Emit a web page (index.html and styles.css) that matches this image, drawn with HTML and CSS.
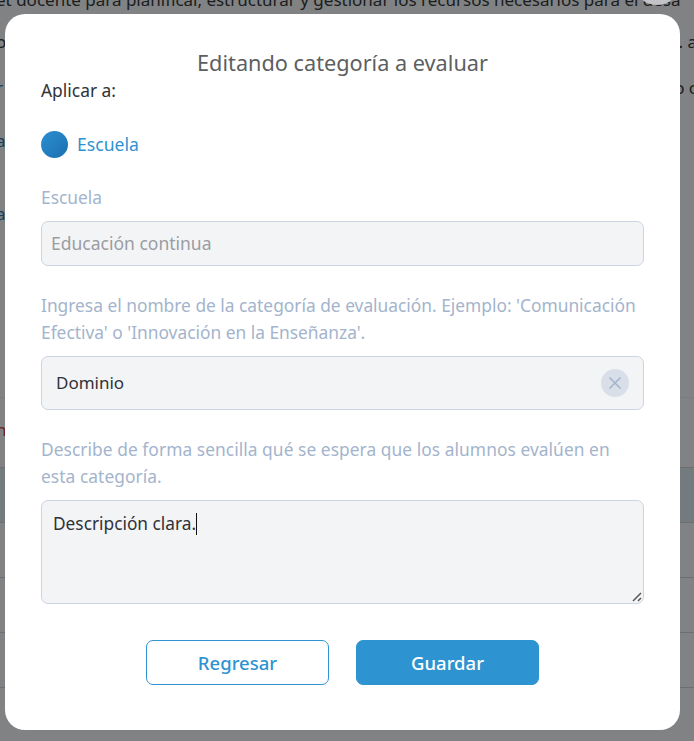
FILE: index.html
```html
<!DOCTYPE html>
<html lang="es">
<head>
  <meta charset="UTF-8">
  <meta name="viewport" content="width=device-width, initial-scale=1.0">
  <title>Editando categoría a evaluar</title>
  <link rel="stylesheet" href="styles.css">
</head>
<body>

  <!-- Page behind the overlay, only its edges show past the modal -->
  <div class="page">
    <p class="intro">et docente para planificar, estructurar y gestionar los recursos necesarios para el desa</p>
    <div class="bg-line gap-14"><span>o</span><span>. a</span></div>
    <div class="bg-line gap-18"><span class="link-dark">r</span><span>o c</span></div>
    <div class="bg-line gap-25 link"><span>a</span></div>
    <div class="bg-line gap-0 link"><span>ı</span></div>
    <div class="bg-line gap-18 link"><span>a</span></div>
    <div class="band-start"></div>
    <div class="bg-line gap-18 error-text"><span>n</span></div>
    <div class="row-line row-tint"></div>
    <div class="row-line"></div>
    <div class="row-line"></div>
    <div class="row-line"></div>
    <div class="row-line"></div>
  </div>

  <div class="overlay"></div>
  <div class="close-ball"></div>

  <!-- Modal -->
  <div class="modal">
    <h2 class="modal-title">Editando categoría a evaluar</h2>
    <p class="apply-label">Aplicar a:</p>
    <label class="radio-row">
      <span class="radio-dot"></span>
      <span class="radio-text">Escuela</span>
    </label>

    <p class="field-label">Escuela</p>
    <div class="field field-disabled">Educación continua</div>

    <p class="field-label">Ingresa el nombre de la categoría de evaluación. Ejemplo: 'Comunicación Efectiva' o 'Innovación en la Enseñanza'.</p>
    <div class="field field-name">
      <span>Dominio</span>
      <span class="clear-btn">
        <svg width="14" height="14" viewBox="0 0 14 14"><path d="M1.5 1.5l11 11M12.5 1.5l-11 11" stroke="#a3b4cc" stroke-width="1.6" fill="none"/></svg>
      </span>
    </div>

    <p class="field-label field-label-wide">Describe de forma sencilla qué se espera que los alumnos evalúen en esta categoría.</p>
    <div class="field field-area">
      <span>Descripción clara.</span><span class="caret"></span>
      <svg class="grip" width="10" height="10" viewBox="0 0 10 10"><path d="M1 9l8-8M6 9l3-3" stroke="#555" stroke-width="1.5" fill="none"/></svg>
    </div>

    <div class="actions">
      <button class="btn btn-outline">Regresar</button>
      <button class="btn btn-solid">Guardar</button>
    </div>
  </div>

</body>
</html>
```

FILE: styles.css
```css
* {
  box-sizing: border-box;
}
body, html {
  margin: 0;
  padding: 0;
  width: 100%;
  height: 100%;
  overflow: hidden;
  font-family: "Noto Sans", "Open Sans", sans-serif;
  background-color: #fff;
}
.page {
  margin-top: -14px;
  font-size: 17px;
  color: #333;
}
.intro {
  margin: 0 0 0 -4px;
  width: 720px;
  line-height: 28px;
  white-space: nowrap;
}
.bg-line {
  display: flex;
  justify-content: space-between;
  height: 28px;
  line-height: 28px;
  padding-left: 0;
  overflow: hidden;
}
.gap-14 { margin-top: 14px; }
.gap-18 { margin-top: 18px; }
.gap-25 { margin-top: 25px; }
.gap-0 { margin-top: -1px; }
.link, .link-dark {
  color: #1c7ab8;
}
.bg-line > span:first-child {
  margin-left: -4px;
}
.bg-line > span:last-child:not(:first-child) {
  margin-right: -3px;
}
.error-text {
  color: #e0382e;
}
.band-start {
  height: 170px;
  border-bottom: 1px solid #f0f0f0;
}
.row-line {
  height: 55px;
  border-top: 1px solid #d5d8dc;
}
.row-tint {
  margin-top: 23px;
  background: #e6f1f5;
}
.overlay {
  position: fixed;
  inset: 0;
  background: rgba(6, 9, 12, 0.51);
}
.close-ball {
  position: absolute;
  top: -43px;
  left: 633px;
  width: 48px;
  height: 48px;
  border-radius: 50%;
  background: #c4c4c8;
}
.modal {
  position: absolute;
  top: 14px;
  left: 5px;
  width: 675px;
  height: 716px;
  padding: 34px 36px 0;
  background: #fff;
  border-radius: 20px;
}
.modal-title {
  margin: 0;
  font-size: 21.7px;
  line-height: 30px;
  font-weight: 400;
  text-align: center;
  color: #5c5f62;
}
.apply-label {
  margin: 0;
  font-size: 17.4px;
  line-height: 24px;
  color: #2f3238;
}
.radio-row {
  display: flex;
  align-items: center;
  gap: 9px;
  margin-top: 28.5px;
}
.radio-dot {
  width: 27px;
  height: 27px;
  border-radius: 50%;
  background: linear-gradient(135deg, #2b8fd0, #1c6fb0);
}
.radio-text {
  font-size: 17.6px;
  color: #2e93d1;
}
.field-label {
  margin: 26.5px 0 9.5px;
  font-size: 17.35px;
  line-height: 27px;
  color: #a3b4cc;
}
.field-label-wide {
  letter-spacing: 0.06px;
}
.field {
  background: #f3f4f6;
  border: 1px solid #cbd5e1;
  border-radius: 7px;
  width: 603px;
  font-size: 17.3px;
  color: #2f3238;
}
.field-disabled {
  height: 45px;
  line-height: 42px;
  padding-left: 9px;
  font-size: 17.5px;
  color: #9a9da2;
}
.field-name {
  display: flex;
  align-items: center;
  justify-content: space-between;
  height: 54px;
  padding: 0 14px;
  font-size: 17px;
}
.clear-btn {
  display: flex;
  align-items: center;
  justify-content: center;
  width: 28px;
  height: 28px;
  border-radius: 50%;
  background: #d8dfe8;
}
.field-area {
  position: relative;
  height: 104px;
  padding: 11px 11px;
}
.caret {
  display: inline-block;
  width: 1px;
  height: 22px;
  vertical-align: -5px;
  background: #111;
}
.grip {
  position: absolute;
  right: 1px;
  bottom: 1px;
}
.actions {
  display: flex;
  justify-content: center;
  gap: 27px;
  margin-top: 36px;
}
.btn {
  width: 183px;
  height: 45px;
  border-radius: 7px;
  font-family: inherit;
  font-size: 18.5px;
  font-weight: 500;
}
.btn-outline {
  background: #fff;
  border: 1px solid #2e93d1;
  color: #2e93d1;
}
.btn-solid {
  background: #2e93d1;
  border: 1px solid #2e93d1;
  color: #fff;
}
```
